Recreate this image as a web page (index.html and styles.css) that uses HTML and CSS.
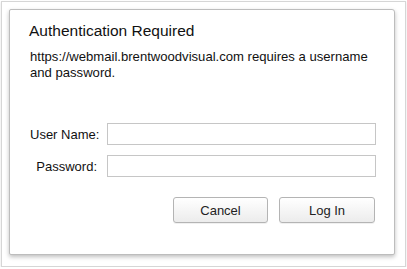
FILE: index.html
```html
<!DOCTYPE html>
<html lang="en">
<head>
    <meta charset="UTF-8">
    <meta name="viewport" content="width=device-width, initial-scale=1.0">
    <title>Authentication Required</title>
    <link rel="stylesheet" href="styles.css">
</head>
<body>
    <div class="frame">
        <div class="dialog">
            <div class="title">Authentication Required</div>
            <p class="message">https://webmail.brentwoodvisual.com requires a username and password.</p>

            <form class="login-form">
                <label for="user">User Name:</label>
                <input type="text" id="user">
                <label for="pass">Password:</label>
                <input type="password" id="pass">
            </form>

            <div class="actions">
                <button type="button">Cancel</button>
                <button type="button">Log In</button>
            </div>
        </div>
    </div>
</body>
</html>
```

FILE: styles.css
```css
* {
    box-sizing: border-box;
}

body {
    font-family: 'Liberation Sans', Arial, sans-serif;
    background: #ffffff;
    color: #1a1a1a;
    margin: 0;
}

.frame {
    width: 405px;
    height: 266px;
    margin: 1px 0 0 1px;
    padding: 7px;
    background: #ffffff;
    border: 1px solid #d6d6d6;
    box-shadow: 0 1px 2px rgba(0, 0, 0, 0.12);
}

.dialog {
    width: 386px;
    height: 246px;
    padding: 12px 19px 0 20px;
    background: #ffffff;
    border: 1px solid #bdbdbd;
    border-radius: 2px 3px 2px 2px;
    box-shadow: 0 2px 4px rgba(0, 0, 0, 0.25);
}

.title {
    font-size: 15.5px;
    line-height: 18px;
    margin-left: -1px;
    color: #111;
}

.message {
    font-size: 13.1px;
    line-height: 16px;
    margin: 9px 0 0;
    color: #111;
}

.login-form {
    display: grid;
    grid-template-columns: 67px 269px;
    column-gap: 10px;
    row-gap: 10px;
    align-items: center;
    margin-top: 42px;
}

.login-form label {
    font-size: 13px;
    text-align: right;
    white-space: nowrap;
    color: #111;
}

.login-form input {
    height: 22px;
    border: 1px solid #c6c6c6;
    background: #fff;
    padding: 2px 4px;
    font: inherit;
    font-size: 13px;
    outline: none;
}

.actions {
    display: flex;
    justify-content: flex-end;
    gap: 11px;
    margin-top: 20px;
}

.actions button {
    width: 95px;
    height: 26px;
    font: inherit;
    font-size: 13px;
    color: #222;
    background: linear-gradient(#ffffff, #ececec);
    border: 1px solid #b4b4b4;
    border-radius: 3px;
    box-shadow: 0 1px 0 rgba(0, 0, 0, 0.06);
}

.actions button + button {
    width: 96px;
}
```
